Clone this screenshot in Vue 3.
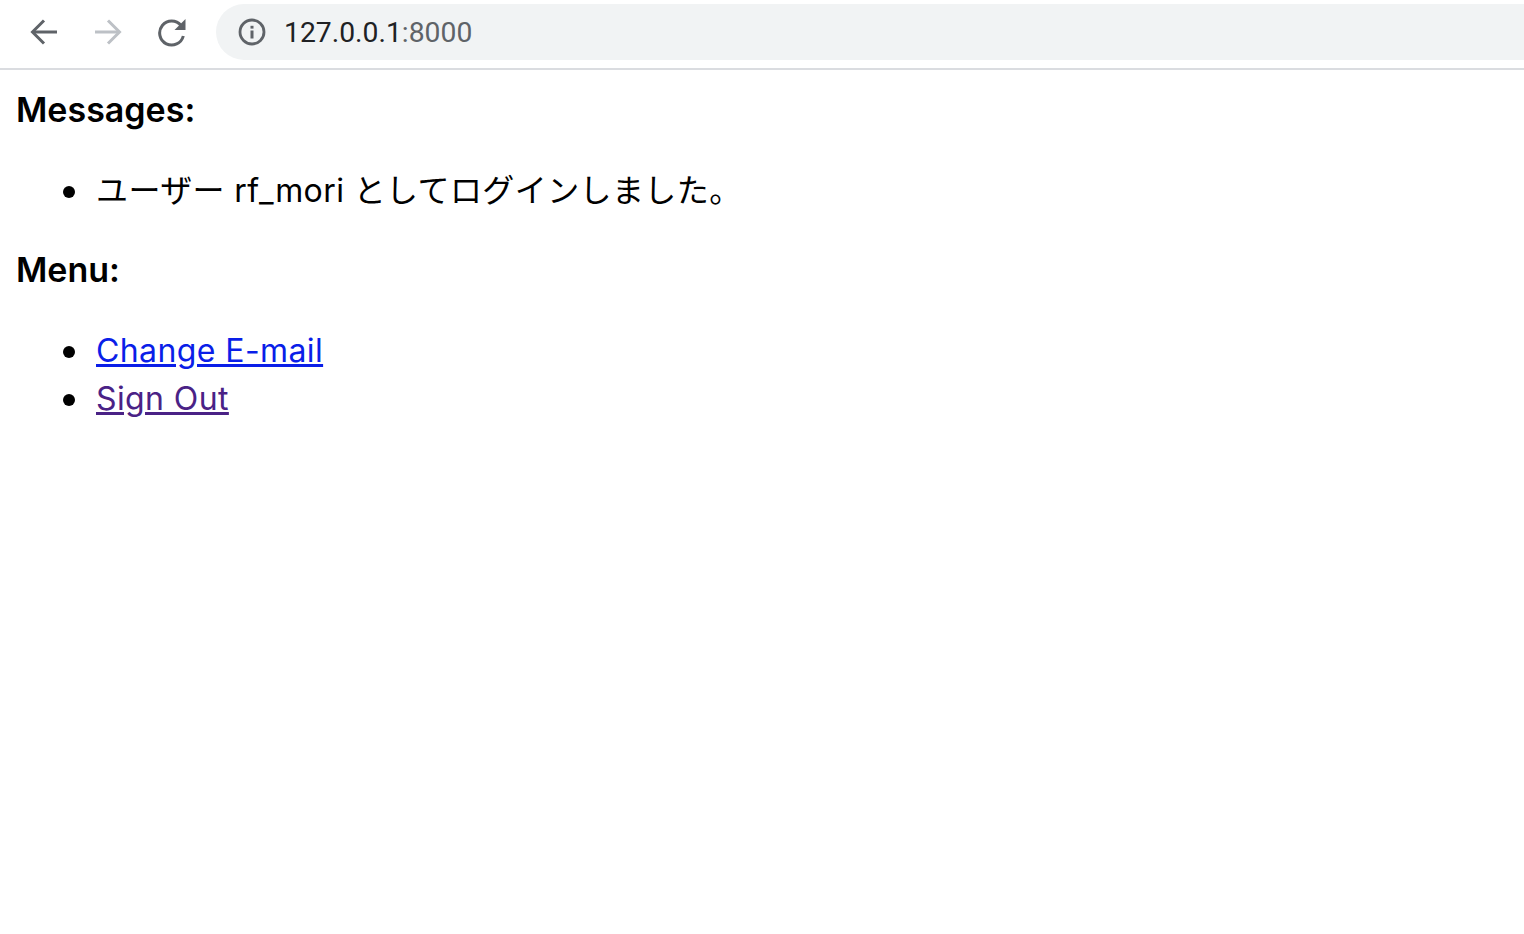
<template>
  <div class="page">
    <header class="toolbar">
      <button class="nav-button" aria-label="Back">
        <svg width="32" height="32" viewBox="0 0 32 32" fill="none" stroke="#5f6368" stroke-width="3">
          <path d="M29 16H5"></path>
          <path d="M16 4.500 4.500 16 16 27.500"></path>
        </svg>
      </button>
      <button class="nav-button" aria-label="Forward">
        <svg width="32" height="32" viewBox="0 0 32 32" fill="none" stroke="#bdc1c6" stroke-width="3">
          <path d="M3 16h24"></path>
          <path d="M16 4.500 27.500 16 16 27.500"></path>
        </svg>
      </button>
      <button class="nav-button" aria-label="Reload">
        <svg width="32" height="32" viewBox="0 0 32 32" fill="none">
          <path d="M25 9.500A12 12 0 1 0 27.300 20" stroke="#5f6368" stroke-width="3"></path>
          <path d="M29.500 3v11h-11z" fill="#5f6368"></path>
        </svg>
      </button>
      <div class="omnibox">
        <svg class="info-icon" width="28" height="28" viewBox="0 0 28 28" fill="none">
          <circle cx="14" cy="14" r="12" stroke="#5f6368" stroke-width="2.800"></circle>
          <rect x="12.500" y="12.500" width="3" height="8" fill="#5f6368"></rect>
          <rect x="12.500" y="7.800" width="3" height="2.800" fill="#5f6368"></rect>
        </svg>
        <span class="url">{{ host }}<span class="port">:{{ port }}</span></span>
      </div>
    </header>

    <main class="content">
      <h3>Messages:</h3>
      <ul>
        <li v-for="msg in messages" :key="msg">{{ msg }}</li>
      </ul>
      <h3>Menu:</h3>
      <ul>
        <li v-for="item in menu" :key="item.label">
          <a href="#" :class="{ visited: item.visited }">{{ item.label }}</a>
        </li>
      </ul>
    </main>
  </div>
</template>

<script setup>
const host = '127.0.0.1'
const port = '8000'
const messages = ['ユーザー rf_mori としてログインしました。']
const menu = [
  { label: 'Change E-mail', visited: false },
  { label: 'Sign Out', visited: true }
]
</script>

<style>
html,
body {
  background: #fff;
}
</style>

<style scoped>
.page {
  min-height: 934px;
  font-family: Inter, "Noto Sans CJK JP", sans-serif;
  color: #000;
}

.toolbar {
  display: flex;
  height: 56px;
  padding: 4px 0 8px 12px;
  align-items: center;
  border-bottom: 2px solid #dadce0;
  overflow: hidden;
}

.nav-button {
  display: flex;
  width: 64px;
  height: 56px;
  padding: 0;
  align-items: center;
  justify-content: center;
  background: none;
  border: none;
}

.omnibox {
  display: flex;
  flex: 1;
  height: 56px;
  margin-left: 12px;
  padding-left: 22px;
  align-items: center;
  background: #f1f3f4;
  border-radius: 28px 0 0 28px;
}

.info-icon {
  margin-right: 18px;
}

.url {
  font-family: Roboto, sans-serif;
  font-size: 28.300px;
  color: #202124;
}

.port {
  color: #5f6368;
}

.content {
  padding: 20px 16px 0;
}

h3 {
  margin: 0;
  font-size: 34px;
  line-height: 40px;
  font-weight: 600;
}

ul {
  margin: 36px 0;
  padding-left: 80px;
  list-style: none;
  font-size: 32px;
  line-height: 48px;
  letter-spacing: 0.4px;
}

ul:last-child {
  margin-bottom: 0;
}

li {
  position: relative;
  padding-top: 1px;
  margin-bottom: -1px;
}

/* bullet sits further out than the default marker */
li::before {
  content: "";
  position: absolute;
  left: -33px;
  top: 20px;
  width: 12px;
  height: 12px;
  background: #000;
  border-radius: 50%;
}

a {
  color: #0a1ee8;
}

a.visited {
  color: #4a2286;
}
</style>
